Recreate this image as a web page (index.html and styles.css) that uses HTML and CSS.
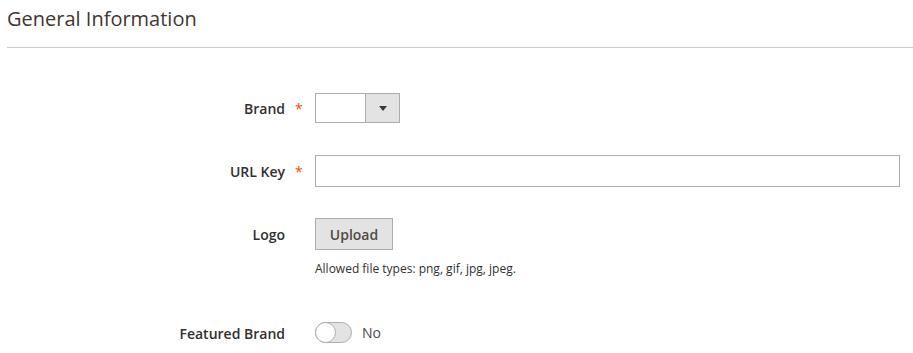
FILE: index.html
```html
<!DOCTYPE html>
<html lang="en">
<head>
<meta charset="utf-8">
<title>General Information</title>
<link rel="stylesheet" href="styles.css">
</head>
<body>
<section class="fieldset">
  <h2 class="fieldset-title">General Information</h2>
  <div class="rows">
    <div class="row row-brand">
      <label class="label">Brand</label>
      <span class="star">*</span>
      <div class="control">
        <div class="select">
          <span class="select-value"></span>
          <span class="select-arrow"><span class="tri"></span></span>
        </div>
      </div>
    </div>
    <div class="row row-url">
      <label class="label">URL Key</label>
      <span class="star">*</span>
      <div class="control">
        <input class="input" type="text">
      </div>
    </div>
    <div class="row row-logo">
      <label class="label">Logo</label>
      <span class="star"></span>
      <div class="control">
        <button class="btn" type="button">Upload</button>
        <div class="note">Allowed file types: png, gif, jpg, jpeg.</div>
      </div>
    </div>
    <div class="row row-featured">
      <label class="label">Featured Brand</label>
      <span class="star"></span>
      <div class="control toggle-wrap">
        <span class="toggle"><span class="knob"></span></span>
        <span class="toggle-text">No</span>
      </div>
    </div>
  </div>
</section>
</body>
</html>
```

FILE: styles.css
```css
html, body {
  margin: 0;
  padding: 0;
  background: #ffffff;
}
body {
  font-family: "Open Sans", "Liberation Sans", sans-serif;
  color: #303030;
}
.fieldset {
  padding-left: 7px;
}
.fieldset-title {
  margin: 0;
  font-size: 20px;
  font-weight: 400;
  color: #41362f;
  line-height: 27px;
  padding-top: 5px;
  padding-bottom: 15px;
  border-bottom: 1px solid #cccccc;
}
.rows {
  display: flex;
  flex-direction: column;
}
.row {
  display: grid;
  grid-template-columns: 278px 30px 1fr;
  align-items: start;
}
.label {
  text-align: right;
  font-size: 14px;
  font-weight: 600;
  color: #303030;
  line-height: 31px;
  padding-top: 1px;
}
.star {
  color: #eb5202;
  font-size: 14px;
  line-height: 31px;
  padding-top: 1px;
  padding-left: 10px;
}
.row-brand { margin-top: 45px; }
.row-brand .label, .row-brand .star { line-height: 28px; padding-top: 2px; }
.row-url { margin-top: 32px; }
.row-logo { margin-top: 31px; }
.row-featured { margin-top: 45px; }
.row-featured .label, .row-featured .star { line-height: 19px; padding-top: 2px; }

.select {
  display: flex;
  width: 85px;
  height: 30px;
  box-sizing: border-box;
  border: 1px solid #adadad;
  background: #ffffff;
}
.select-value { flex: 1; }
.select-arrow {
  width: 33px;
  background: #e3e3e3;
  border-left: 1px solid #adadad;
  display: flex;
  align-items: center;
  justify-content: center;
}
.tri {
  width: 0;
  height: 0;
  border-left: 4px solid transparent;
  border-right: 4px solid transparent;
  border-top: 5px solid #41362f;
}
.input {
  display: block;
  box-sizing: border-box;
  width: 585px;
  height: 32px;
  border: 1px solid #adadad;
  margin: 0;
  padding: 0 10px;
  background: #ffffff;
  outline: none;
}
.btn {
  display: block;
  box-sizing: border-box;
  width: 78px;
  height: 32px;
  margin: 0;
  padding: 0;
  border: 1px solid #adadad;
  background: #e3e3e3;
  color: #514943;
  font-family: "Open Sans", "Liberation Sans", sans-serif;
  font-size: 14px;
  font-weight: 600;
}
.note {
  margin-top: 10px;
  font-size: 12px;
  line-height: 17px;
  color: #303030;
}
.toggle-wrap {
  display: flex;
  align-items: center;
  height: 21px;
}
.toggle {
  position: relative;
  display: block;
  width: 37px;
  height: 21px;
  box-sizing: border-box;
  border: 1px solid #adadad;
  border-radius: 11px;
  background: #e3e3e3;
}
.knob {
  position: absolute;
  left: -1px;
  top: -1px;
  width: 21px;
  height: 21px;
  box-sizing: border-box;
  border: 1px solid #adadad;
  border-radius: 50%;
  background: #ffffff;
}
.toggle-text {
  margin-left: 10px;
  font-size: 14px;
  color: #514943;
}
```
